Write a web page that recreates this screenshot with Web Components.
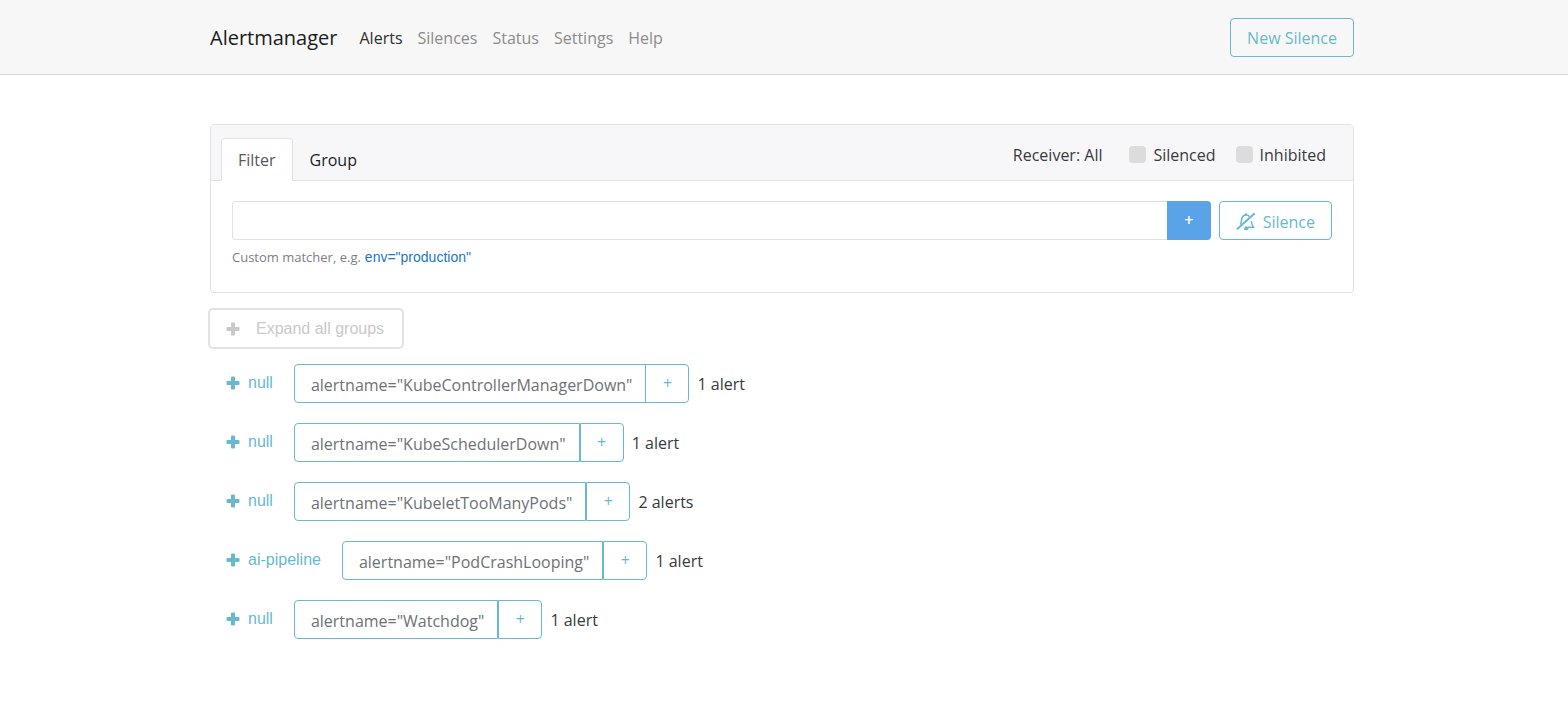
<!DOCTYPE html>
<html lang="en">
<head>
<meta charset="utf-8">
<meta name="viewport" content="width=device-width, initial-scale=1">
<title>Alertmanager</title>
<style>
  body {
    margin: 0;
    background: #fff;
    color: #373a3c;
    font: 16px/24px "Open Sans", "Noto Sans", sans-serif;
    --info: #68b9d0;
    --line: #e2e2e3;
    --control-height: 39px;
    --sans: "Liberation Sans", Arial, sans-serif;
  }
</style>
</head>
<body>
<am-navbar>
  <a slot="brand" href="#/">Alertmanager</a>
  <am-nav-link href="#/alerts" active>Alerts</am-nav-link>
  <am-nav-link href="#/silences">Silences</am-nav-link>
  <am-nav-link href="#/status">Status</am-nav-link>
  <am-nav-link href="#/settings">Settings</am-nav-link>
  <am-nav-link href="#/help">Help</am-nav-link>
  <am-button slot="action">New Silence</am-button>
</am-navbar>

<am-page>
  <am-filter-card></am-filter-card>
  <am-group-list>
    <am-alert-group receiver="null" matcher='alertname="KubeControllerManagerDown"' count="1" joined></am-alert-group>
    <am-alert-group receiver="null" matcher='alertname="KubeSchedulerDown"' count="1"></am-alert-group>
    <am-alert-group receiver="null" matcher='alertname="KubeletTooManyPods"' count="2"></am-alert-group>
    <am-alert-group receiver="ai-pipeline" matcher='alertname="PodCrashLooping"' count="1"></am-alert-group>
    <am-alert-group receiver="null" matcher='alertname="Watchdog"' count="1"></am-alert-group>
  </am-group-list>
</am-page>

<script>
const plusIcon = `
  <svg viewBox="0 0 14 14" width="14" height="14" aria-hidden="true">
    <path fill="currentColor" d="M6 .5h2a1 1 0 0 1 1 1V5h3.500a1 1 0 0 1 1 1v2a1 1 0 0 1-1 1H9v3.500a1 1 0 0 1-1 1H6a1 1 0 0 1-1-1V9H1.500a1 1 0 0 1-1-1V6a1 1 0 0 1 1-1H5V1.500a1 1 0 0 1 1-1z"/>
  </svg>`;

const bellSlashIcon = `
  <svg viewBox="0 0 20 20" width="20" height="20" fill="none" stroke="currentColor" aria-hidden="true">
    <path stroke-width="1.500" d="M4.200 12.500C5.600 10.800 5.300 9 5.700 7 6.200 4.500 7.800 3 10 3c1.500 0 2.800.700 3.600 1.800M15.200 9c.200 2.600.900 4.300 2.300 6.200H9"/>
    <path stroke-width="2" d="M18.800 1.200 1 17.300"/>
    <path fill="currentColor" stroke="none" d="M7.600 15.800h5a2.500 2.500 0 0 1-5 0zM9 1.200h2v2H9z"/>
  </svg>`;

// Shared by every element: keeps native controls on the page's font.
const base = `
  * { box-sizing: border-box; }
  button, input { font: inherit; color: inherit; margin: 0; }
  button { cursor: pointer; background: none; border: 0; padding: 0; }
  a { color: inherit; text-decoration: none; }
  svg { display: block; flex: none; }
`;

function define(name, html, setup) {
  const template = document.createElement('template');
  template.innerHTML = html;

  window.customElements.define(name, class extends HTMLElement {
    constructor() {
      super();
      this.attachShadow({ mode: 'open' });
      this.shadowRoot.appendChild(template.content.cloneNode(true));
    }

    connectedCallback() {
      if (setup) {
        setup(this, this.shadowRoot);
      }
    }
  });
}

define('am-button', `
  <style>
    ${base}
    :host { display: block; }
    button {
      display: flex;
      align-items: center;
      gap: 7px;
      height: var(--control-height);
      padding: 2px 16px 0;
      border: 1px solid var(--info);
      border-radius: 4px;
      color: var(--info);
      white-space: nowrap;
    }
  </style>
  <button type="button"><slot name="icon"></slot><slot></slot></button>
`);

define('am-nav-link', `
  <style>
    ${base}
    :host { display: block; color: #8c8c8c; }
    :host([active]) { color: #2f2f2f; }
  </style>
  <a><slot></slot></a>
`, (host, root) => {
  root.querySelector('a').href = host.getAttribute('href');
});

define('am-navbar', `
  <style>
    ${base}
    :host {
      display: block;
      background: #f7f7f7;
      border-bottom: 1px solid #d9d9d9;
    }
    header {
      display: flex;
      align-items: center;
      max-width: 1176px;
      height: 74px;
      margin: 0 auto;
      padding: 0 18px 0 14px;
    }
    ::slotted([slot="brand"]) {
      margin-right: 22px;
      padding-top: 2px;
      color: #1c1c1c;
      font-size: 20px;
      text-decoration: none;
    }
    nav { display: flex; gap: 15px; flex: 1; padding-top: 2px; }
  </style>
  <header>
    <slot name="brand"></slot>
    <nav><slot></slot></nav>
    <slot name="action"></slot>
  </header>
`);

define('am-page', `
  <style>
    ${base}
    :host {
      display: block;
      box-sizing: border-box;
      max-width: 1176px;
      margin: 0 auto;
      padding: 49px 18px 49px 14px;
    }
  </style>
  <main><slot></slot></main>
`);

define('am-checkbox', `
  <style>
    ${base}
    :host { display: block; }
    label { display: flex; align-items: center; gap: 7px; cursor: pointer; }
    input {
      appearance: none;
      width: 17px;
      height: 17px;
      border-radius: 4px;
      background: #dcdcdc;
    }
    input:checked { background: #0074d9; }
  </style>
  <label><input type="checkbox"><slot></slot></label>
`);

define('am-filter-card', `
  <style>
    ${base}
    :host {
      display: block;
      border: 1px solid var(--line);
      border-radius: 4px;
    }
    .head {
      display: flex;
      justify-content: space-between;
      height: 56px;
      padding: 0 27px 0 10px;
      background: #f7f7f9;
      border-bottom: 1px solid var(--line);
    }
    .tabs { display: flex; align-items: flex-end; margin-bottom: -1px; }
    .tab {
      height: 43px;
      padding: 9px 16px;
      border: 1px solid transparent;
      border-radius: 4px 4px 0 0;
      color: #1c1c1c;
    }
    .tab.active {
      background: #fff;
      border-color: var(--line);
      border-bottom-color: #fff;
      color: #55595c;
    }
    .options { display: flex; align-items: center; gap: 20px; padding-top: 4px; }
    .options button { margin-right: 7px; }
    .body { padding: 20px 21px 23px; }
    .row { display: flex; }
    .matcher {
      flex: 1;
      min-width: 0;
      height: var(--control-height);
      padding: 0 12px;
      border: 1px solid var(--line);
      border-right: 0;
      border-radius: 4px 0 0 4px;
      outline: 0;
    }
    .add {
      width: 44px;
      margin-right: 8px;
      padding-bottom: 2px;
      border-radius: 0 4px 4px 0;
      background: #5aa3e6;
      color: #fff;
      font-weight: 600;
    }
    .hint {
      display: flex;
      align-items: baseline;
      gap: 4px;
      margin-top: 5px;
      font-size: 13px;
      color: #7b8083;
    }
    .hint button {
      font: 14px/24px var(--sans);
      color: #1b76cc;
    }
  </style>
  <div class="head">
    <nav class="tabs">
      <a class="tab active" href="#filter">Filter</a>
      <a class="tab" href="#group">Group</a>
    </nav>
    <div class="options">
      <button type="button">Receiver: All</button>
      <am-checkbox>Silenced</am-checkbox>
      <am-checkbox>Inhibited</am-checkbox>
    </div>
  </div>
  <div class="body">
    <div class="row">
      <input class="matcher" id="matcher" type="text">
      <button class="add" type="button">+</button>
      <am-button><span slot="icon">${bellSlashIcon}</span>Silence</am-button>
    </div>
    <div class="hint">
      <label for="matcher">Custom matcher, e.g.</label>
      <button type="button">env="production"</button>
    </div>
  </div>
`);

define('am-group-list', `
  <style>
    ${base}
    :host { display: block; margin-top: 15px; }
    .expand {
      display: flex;
      align-items: center;
      gap: 16px;
      height: 41px;
      margin-left: -2px;
      padding: 0 18px 0 16px;
      border: 2px solid #e2e2e2;
      border-radius: 5px;
      font-family: var(--sans);
      color: #c9c9c9;
    }
    .groups { display: grid; gap: 20px; margin-top: 15px; }
  </style>
  <button class="expand" type="button">${plusIcon}Expand all groups</button>
  <div class="groups"><slot></slot></div>
`);

define('am-alert-group', `
  <style>
    ${base}
    :host {
      display: flex;
      align-items: center;
      height: var(--control-height);
      padding-left: 16px;
    }
    .receiver {
      display: flex;
      align-items: center;
      gap: 8px;
      margin-right: 21px;
      padding-bottom: 2px;
      font-family: var(--sans);
      color: var(--info);
    }
    .matcher, .add { height: 100%; border: 1px solid var(--info); }
    .matcher {
      padding: 2px 13px 0 16px;
      border-radius: 4px 0 0 4px;
      color: #6d7276;
    }
    .add {
      width: 44px;
      padding-bottom: 2px;
      border-radius: 0 4px 4px 0;
      color: var(--info);
    }
    /* collapses the double divider into one line */
    :host([joined]) .add { margin-left: -1px; }
    .count { margin-left: 8px; }
  </style>
  <button class="receiver" type="button">${plusIcon}<span></span></button>
  <button class="matcher" type="button"></button>
  <button class="add" type="button">+</button>
  <span class="count"></span>
`, (host, root) => {
  const count = +host.getAttribute('count');

  root.querySelector('.receiver span').textContent = host.getAttribute('receiver');
  root.querySelector('.matcher').textContent = host.getAttribute('matcher');
  root.querySelector('.count').textContent = `${count} alert${count === 1 ? '' : 's'}`;
});
</script>
</body>
</html>
